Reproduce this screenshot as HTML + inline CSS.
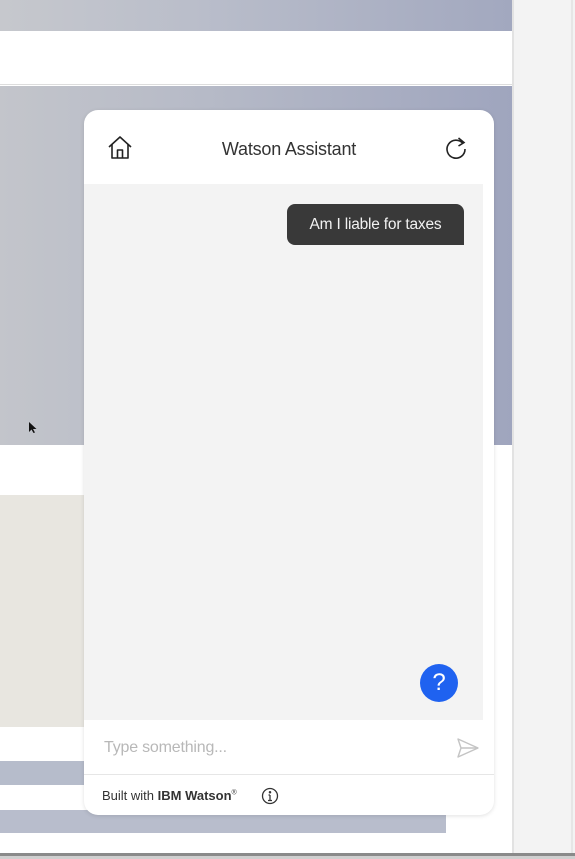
<!DOCTYPE html>
<html><head><meta charset="utf-8"><style>
*{margin:0;padding:0;box-sizing:border-box}
body{width:575px;height:859px;position:relative;overflow:hidden;background:#f3f3f3;font-family:"Liberation Sans",sans-serif}
.a{position:absolute}
</style></head><body>
<div class="a" style="left:0;top:0;width:513px;height:853px;background:#fff"></div>
<div class="a" style="left:0;top:0;width:513px;height:31px;background:linear-gradient(90deg,#c6c8cd,#b9bdca 40%,#a2a8bf)"></div>
<div class="a" style="left:0;top:31px;width:513px;height:54px;background:#fff;border-bottom:1px solid #ddd"></div>
<div class="a" style="left:0;top:86px;width:513px;height:359px;background:linear-gradient(90deg,#c3c5cb,#b6bac7 40%,#9fa5be)"></div>
<div class="a" style="left:0;top:495px;width:90px;height:232px;background:#e8e6e0"></div>
<div class="a" style="left:0;top:761px;width:90px;height:24px;background:#b6bccb"></div>
<div class="a" style="left:0;top:810px;width:446px;height:23px;background:#b8bdcc"></div>
<div class="a" style="left:512px;top:0;width:2px;height:853px;background:#e2e2e2"></div>
<div class="a" style="left:571px;top:0;width:2px;height:853px;background:#e6e6e6"></div>
<div class="a" style="left:0;top:853px;width:575px;height:3px;background:#8a8a8a"></div>
<div class="a" style="left:0;top:856px;width:575px;height:3px;background:#cfcfcf"></div>

<div class="a" style="left:84px;top:110px;width:410px;height:705px;background:#fff;border-radius:14px;overflow:hidden;box-shadow:0 1px 4px rgba(0,0,0,.12)">
  <svg class="a" style="left:22px;top:24px" width="28" height="28" viewBox="0 0 28 28" fill="none" stroke="#222" stroke-width="1.6" stroke-linejoin="round">
    <path d="M3 13 L14 3 L25 13"/><path d="M6 10.5 V24 H22 V10.5"/><path d="M11.5 24 V16 H16.5 V24"/>
  </svg>
  <div class="a" style="left:0;width:410px;top:29px;text-align:center;font-size:18px;color:#333;letter-spacing:-0.2px">Watson Assistant</div>
  <svg class="a" style="left:358px;top:24px" width="28" height="28" viewBox="0 0 28 28" fill="none" stroke="#222" stroke-width="1.6">
    <path d="M21 9.5 A9 9 0 1 0 23 15"/><path d="M16.5 4 L22 8.5 L16.5 12"/>
  </svg>
  <div class="a" style="left:0;top:74px;width:399px;height:536px;background:#f3f3f3"></div>
  <div class="a" style="left:203px;top:94px;width:177px;height:41px;background:#393939;border-radius:8px 8px 0 8px;color:#f2f2f2;font-size:15.5px;line-height:42px;text-align:center;letter-spacing:-0.2px">Am I liable for taxes</div>
  <div class="a" style="left:336px;top:554px;width:38px;height:38px;border-radius:50%;background:#1f62f0;color:#fff;font-size:24px;line-height:38px;text-align:center">?</div>
  <div class="a" style="left:20px;top:629px;font-size:16px;color:#b8b8b8;letter-spacing:-0.2px">Type something...</div>
  <svg class="a" style="left:372px;top:627px" width="24" height="22" viewBox="0 0 24 22" fill="none" stroke="#c4c4c4" stroke-width="1.4" stroke-linejoin="round">
    <path d="M2 2 L22 11 L2 20 L5 11 Z"/><path d="M5 11 H22"/>
  </svg>
  <div class="a" style="left:0;top:664px;width:410px;height:1px;background:#e6e6e6"></div>
  <div class="a" style="left:18px;top:678px;font-size:13px;color:#333">Built with <b>IBM Watson</b><sup style="font-size:7px">®</sup></div>
  <svg class="a" style="left:177px;top:677px" width="18" height="18" viewBox="0 0 18 18" fill="none" stroke="#333" stroke-width="1.3">
    <circle cx="9" cy="9" r="7.5"/><path d="M9 8 V13.5 M7 13.5 H11 M7.5 8 H9"/><circle cx="9" cy="5.3" r=".6" fill="#333"/>
  </svg>
</div>
<svg class="a" style="left:28px;top:421px" width="10" height="14" viewBox="0 0 10 14"><path d="M1 1 L1 11 L3.5 8.5 L5.5 12 L7 11.5 L5 8 L8.5 8 Z" fill="#111"/></svg>
</body></html>
